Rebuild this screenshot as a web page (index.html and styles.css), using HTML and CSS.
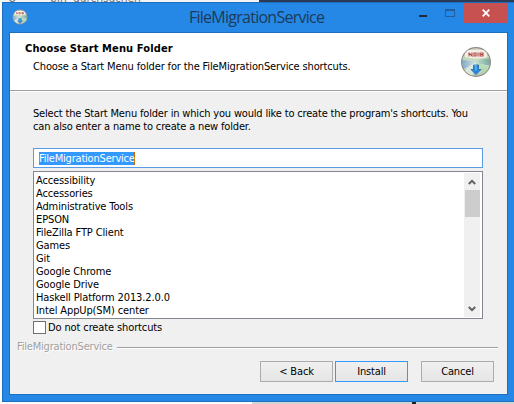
FILE: index.html
```
<!DOCTYPE html>
<html lang="en">
<head>
<meta charset="utf-8">
<title>FileMigrationService</title>
<link rel="stylesheet" href="styles.css">
</head>
<body>
<div class="behind-top"><span class="tab"><span class="peek">O</span><span class="peek find">bin&nbsp; durchsuchen</span></span></div>
<div class="window">
  <header class="titlebar">
    <svg class="app-icon" viewBox="0 0 32 32"><use href="#disc"/></svg>
    <h1 class="title">FileMigrationService</h1>
    <div class="controls">
      <span class="min"></span><span class="max"></span>
      <span class="close"><svg viewBox="0 0 8 8"><path d="M.7.7l6.6 6.6M7.3.7L.7 7.3" stroke="#fff" stroke-width="1.8"/></svg></span>
    </div>
  </header>
  <main class="client">
    <section class="banner">
      <div>
        <h2><span class="heading">Choose Start Menu Folder</span></h2>
        <p class="sub">Choose a Start Menu folder for the FileMigrationService shortcuts.</p>
      </div>
      <svg class="logo" viewBox="0 0 32 32">
        <defs>
          <linearGradient id="sheen" x1="0" y1="0" x2="0" y2="1">
            <stop offset="0" stop-color="#d9d3c9"/><stop offset=".35" stop-color="#c3d8b4"/><stop offset=".6" stop-color="#d3e3e2"/><stop offset="1" stop-color="#b5c4ae"/>
          </linearGradient>
          <linearGradient id="left" x1="0" y1="0" x2="1" y2="0">
            <stop offset="0" stop-color="#5f93bd"/><stop offset="1" stop-color="#d5e6ea"/>
          </linearGradient>
          <linearGradient id="right" x1="0" y1="0" x2="1" y2="0">
            <stop offset="0" stop-color="#c4ded2"/><stop offset="1" stop-color="#5d9a90"/>
          </linearGradient>
          <clipPath id="round"><circle cx="16" cy="16" r="14"/></clipPath>
        </defs>
        <g id="disc">
          <circle cx="16" cy="16" r="14.4" fill="url(#sheen)" stroke="#918c84" stroke-width="1.2"/>
          <g clip-path="url(#round)">
            <path d="M16 16L0 13v12z" fill="url(#left)" opacity=".8"/>
            <path d="M16 14l16-2v8l-16-3z" fill="url(#right)" opacity=".9"/>
            <path d="M16 17l16 4-6 11z" fill="#a9dba0" opacity=".6"/>
            <path d="M16 16L4 25l8 7z" fill="#e6efe5" opacity=".7"/>
            <path d="M5 4h22v7q-11 3-22 0z" fill="#f4eee9"/>
          </g>
          <path d="M9 6.500v4M9 7l3 3v-3.500M14 7h2v3h-2zM18 6.500v4M20 7h3v3h-3zM20 8.500h3" fill="none" stroke="#b34a43" stroke-width="1.100"/>
          <path d="M13.500 19h5v4.500h2.500L16 28.500l-5-5h2.500z" fill="#268be0" stroke="#2467a5" stroke-width=".8"/>
          <path d="M14.500 19.500h1.500v5" stroke="#73c8fb" fill="none"/>
        </g>
      </svg>
    </section>
    <section class="content">
      <p class="intro">Select the Start Menu folder in which you would like to create the program's shortcuts. You<br>can also enter a name to create a new folder.</p>
      <div class="field"><span class="selected">FileMigrationService</span></div>
      <div class="list">
        <ul>
          <li>Accessibility</li><li>Accessories</li><li>Administrative Tools</li><li>EPSON</li><li>FileZilla FTP Client</li><li>Games</li><li>Git</li><li>Google Chrome</li><li>Google Drive</li><li>Haskell Platform 2013.2.0.0</li><li>Intel AppUp(SM) center</li>
        </ul>
        <div class="scroll">
          <svg viewBox="0 0 8 6"><path d="M.8 5L4 1.800 7.200 5" fill="none" stroke="#606060" stroke-width="2"/></svg>
          <span class="thumb"></span>
          <svg viewBox="0 0 8 6"><path d="M.8 1L4 4.200 7.200 1" fill="none" stroke="#606060" stroke-width="2"/></svg>
        </div>
      </div>
      <label class="check"><span class="box"></span><span>Do not create shortcuts</span></label>
    </section>
    <div class="branding"><span>FileMigrationService</span><i></i></div>
    <footer class="buttons">
      <span class="btn">&lt; Back</span><span class="btn primary">Install</span><span class="btn cancel">Cancel</span>
    </footer>
  </main>
</div>
<div class="behind-bottom"></div>
</body>
</html>
```
FILE: styles.css
```
* { box-sizing: border-box; }
body {
  margin: 0;
  width: 514px;
  height: 404px;
  overflow: hidden;
  background: #fbfbfb;
  font: 11px/13px "DejaVu Sans Condensed", "DejaVu Sans", sans-serif;
  font-stretch: condensed;
  letter-spacing: -0.16px;
  color: #000;
}
h1, h2, p, ul { margin: 0; padding: 0; font: inherit; }
svg { display: block; }
.behind-top { height: 2px; background: #2b3a56; overflow: hidden; }
.tab { display: flex; width: 259px; height: 2px; background: #f4f4f4; color: #777; font-size: 12px; line-height: 2px; overflow: hidden; }
.peek { margin-left: 8px; margin-top: -3px; white-space: nowrap; }
.find { margin-left: 34px; }
.window {
  margin-left: 2px;
  width: 520px;
  height: 400px;
  padding: 0 0 0 6px;
  border: 1px solid #1c6fbd;
  background: #2588e6;
}
.titlebar { height: 29px; display: flex; align-items: flex-start; }
.app-icon { width: 16px; height: 16px; margin: 6px 0 0 3px; }
.title {
  margin-left: 161px;
  padding-top: 3px;
  width: 137px;
  white-space: nowrap;
  font: 16px/22px "Open Sans", "Noto Sans", sans-serif;
  letter-spacing: -0.74px;
  color: #1d3a58;
}
.controls { display: flex; margin-left: 93px; }
.min { width: 8px; height: 2px; margin-top: 12px; background: #202b35; }
.max { width: 10px; height: 8px; margin: 6px 8px 0 18px; border: 1px solid #235f9e; border-top-width: 2px; }
.close { width: 45px; height: 20px; display: flex; align-items: center; justify-content: center; background: #c75050; }
.close svg { width: 8px; height: 8px; }
.client {
  width: 499px;
  height: 363px;
  border: 1px solid #1c6fbd;
  background: #f0f0f0;
}
.banner {
  height: 58px;
  display: flex;
  justify-content: space-between;
  padding: 9px 15px 0 15px;
  background: #fff;
  border-bottom: 1px solid #a0a0a0;
  box-shadow: 0 1px #fff;
  white-space: nowrap;
}
h2 { font-weight: bold; }
.heading { letter-spacing: 0.12px; }
.sub { margin-top: 5px; padding-left: 8px; letter-spacing: -0.14px; }
.logo { width: 32px; height: 32px; margin-top: 4px; }
.content { width: 450px; margin: 16px 0 0 23px; white-space: nowrap; }
.field { height: 20px; margin-top: 15px; padding: 3px 5px; border: 1px solid #569de5; background: #fff; }
.intro { letter-spacing: -0.17px; }
.selected { display: block; width: 96px; height: 13px; background: #3399ff; color: #fff; border-right: 1px solid #cc6600; letter-spacing: -0.2px; }
.list { height: 148px; margin-top: 3px; border: 1px solid #828790; background: #fff; display: flex; justify-content: space-between; padding: 1px; }
ul { list-style: none; padding: 1px 0 0 1px; letter-spacing: -0.12px; }
.scroll { width: 16px; margin-right: 1px; background: #f0f0f0; display: flex; flex-direction: column; align-items: center; }
.scroll svg { width: 8px; height: 6px; margin: 6px 0 5px; }
.scroll .thumb { width: 15px; height: 27px; margin-bottom: auto; background: #cdcdcd; }
.check { display: flex; gap: 2px; margin-top: 2px; height: 13px; letter-spacing: -0.12px; }
.box { width: 13px; height: 13px; border: 1px solid #707070; background: #fff; }
.branding { display: flex; align-items: center; gap: 5px; margin: 6px 9px 0 7px; color: #a0a0a0; text-shadow: 1px 1px #fff; }
.branding span { width: 95px; white-space: nowrap; letter-spacing: -0.2px; }
.branding i { flex: 1; height: 2px; background: #a0a0a0; border-bottom: 1px solid #fff; margin-top: 2px; }
.buttons { display: flex; gap: 2px; margin: 8px 0 0 250px; }
.btn { width: 73px; height: 21px; border: 1px solid #acacac; background: linear-gradient(#f0f0f0, #e5e5e5); text-align: center; line-height: 20px; }
.primary { border-color: #3399ff; }
.cancel { margin-left: 11px; }
.behind-bottom { height: 2px; margin-left: 252px; background: linear-gradient(90deg, #d5d5d5 0 160px, #222 160px 164px, #d5d5d5 164px); }
```
